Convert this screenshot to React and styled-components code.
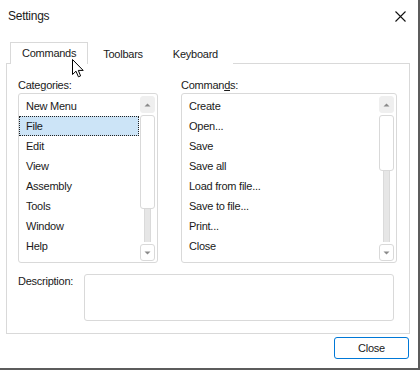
import styled, { createGlobalStyle } from 'styled-components'

const GlobalStyle = createGlobalStyle`
  body {
    margin: 0;
    font-family: "Liberation Sans", Arial, sans-serif;
    font-size: 11px;
    letter-spacing: -0.25px;
    color: #1a1a1a;
    background: #fff;
  }
`

const Window = styled.div`
  position: relative;
  width: 420px;
  height: 370px;
  box-sizing: border-box;
  background: #fff;
  border-right: 2px solid #5c5c5c;
  border-bottom: 2px solid #5c5c5c;
  display: flex;
  flex-direction: column;
`

const TitleBar = styled.div`
  height: 32px;
  display: flex;
  align-items: center;
  justify-content: space-between;
  padding: 0 12px 0 8px;
  font-size: 12px;
`

const TabStrip = styled.div`
  display: flex;
  align-items: flex-end;
  height: 21px;
  margin-top: 10px;
  padding-left: 10px;
  position: relative;
  z-index: 1;
`

const Tab = styled.div`
  box-sizing: border-box;
  height: ${p => (p.$active ? '22px' : '20px')};
  line-height: ${p => (p.$active ? '20px' : '18px')};
  padding: 0 ${p => p.$pad}px;
  border: 1px solid ${p => (p.$active ? '#d9d9d9' : 'transparent')};
  border-bottom: none;
  background: #fff;
  margin-bottom: -1px;
`

const Panel = styled.div`
  margin: 0 8px 0 6px;
  height: 271px;
  box-sizing: border-box;
  border: 1px solid #d9d9d9;
  padding: 13px 15px 13px 11px;
  display: flex;
  flex-direction: column;
`

const Columns = styled.div`
  display: grid;
  grid-template-columns: 140px 216px;
  column-gap: 23px;
`

const Label = styled.div`
  line-height: 16px;
`

const ListBox = styled.div`
  height: 170px;
  box-sizing: border-box;
  border: 1px solid #d9d9d9;
  border-radius: 3px;
  display: flex;
`

const Items = styled.div`
  flex: 1;
  padding-top: 2px;
`

const Item = styled.div`
  height: 20px;
  line-height: 18px;
  padding-left: 6px;
  box-sizing: border-box;
  border: 1px dotted ${p => (p.$selected ? '#222' : 'transparent')};
  background: ${p => (p.$selected ? '#cce4f7' : 'transparent')};
`

const ScrollBar = styled.div`
  width: 17px;
  display: flex;
  flex-direction: column;
  align-items: center;
  padding-right: 1px;
`

const ArrowBtn = styled.div`
  width: 15px;
  height: 17px;
  margin: ${p => (p.$down ? '2px 0 1px' : '2px 0 2px')};
  box-sizing: border-box;
  border-radius: 3px;
  background: ${p => (p.$down ? '#fff' : '#efefef')};
  border: 1px solid ${p => (p.$down ? '#d9d9d9' : '#efefef')};
  display: flex;
  align-items: center;
  justify-content: center;
`

const Thumb = styled.div`
  width: 15px;
  box-sizing: border-box;
  border: 1px solid #d9d9d9;
  border-radius: 3px;
  background: #fff;
`

const Track = styled.div`
  flex: 1;
  width: 5px;
  background: #e6e6e6;
  border-left: 1px solid #dadada;
  border-right: 1px solid #dadada;
`

const DescRow = styled.div`
  display: flex;
  margin-top: 11px;
`

const DescLabel = styled.div`
  width: 66px;
  line-height: 14px;
`

const DescBox = styled.div`
  width: 312px;
  height: 47px;
  box-sizing: border-box;
  border: 1px solid #d9d9d9;
  border-radius: 3px;
`

const Footer = styled.div`
  display: flex;
  justify-content: flex-end;
  padding: 3px 9px 0 0;
`

const Button = styled.button`
  width: 75px;
  height: 22px;
  box-sizing: border-box;
  border: 1px solid #0078d7;
  border-radius: 3px;
  background: #fff;
  font-family: inherit;
  font-size: 11px;
  letter-spacing: inherit;
  color: #1a1a1a;
  padding: 0;
`

const Cursor = styled.svg`
  position: absolute;
  left: 72px;
  top: 59px;
  z-index: 5;
`

const Arrow = ({ down }) => (
  <svg width="7" height="4" viewBox="0 0 7 4">
    <path d={down ? 'M0.5 0.5h6L3.5 3.5z' : 'M0.5 3.5h6L3.5 0.5z'} fill="#8a8a8a" />
  </svg>
)

const List = ({ items, selected, thumb }) => (
  <ListBox>
    <Items>
      {items.map(it => (
        <Item key={it} $selected={it === selected}>{it}</Item>
      ))}
    </Items>
    <ScrollBar>
      <ArrowBtn><Arrow /></ArrowBtn>
      <Thumb style={{ height: thumb }} />
      <Track />
      <ArrowBtn $down><Arrow down /></ArrowBtn>
    </ScrollBar>
  </ListBox>
)

const categories = ['New Menu', 'File', 'Edit', 'View', 'Assembly', 'Tools', 'Window', 'Help']
const commands = ['Create', 'Open...', 'Save', 'Save all', 'Load from file...', 'Save to file...', 'Print...', 'Close']

export default function App() {
  return (
    <>
      <GlobalStyle />
      <Window>
        <TitleBar>
          <span>Settings</span>
          <svg width="11" height="11" viewBox="0 0 11 11">
            <path d="M0.5 0.5L10.5 10.5M10.5 0.5L0.5 10.5" stroke="#111" strokeWidth="1.1" />
          </svg>
        </TitleBar>
        <TabStrip>
          <Tab $active $pad={11}>Commands</Tab>
          <Tab $pad={14}>Toolbars</Tab>
          <Tab $pad={14}>Keyboard</Tab>
        </TabStrip>
        <Panel>
          <Columns>
            <div>
              <Label>Cate<u>g</u>ories:</Label>
              <List items={categories} selected="File" thumb={94} />
            </div>
            <div>
              <Label>Comman<u>d</u>s:</Label>
              <List items={commands} thumb={56} />
            </div>
          </Columns>
          <DescRow>
            <DescLabel>Description:</DescLabel>
            <DescBox />
          </DescRow>
        </Panel>
        <Footer>
          <Button>Close</Button>
        </Footer>
        <Cursor width="12" height="19" viewBox="0 0 12 19">
          <path d="M0.5 0.5V15.5L4 12.2L6.4 17.8L8.6 16.9L6.3 11.4H11.2Z" fill="#fff" stroke="#000" strokeWidth="1" strokeLinejoin="round" />
        </Cursor>
      </Window>
    </>
  )
}
